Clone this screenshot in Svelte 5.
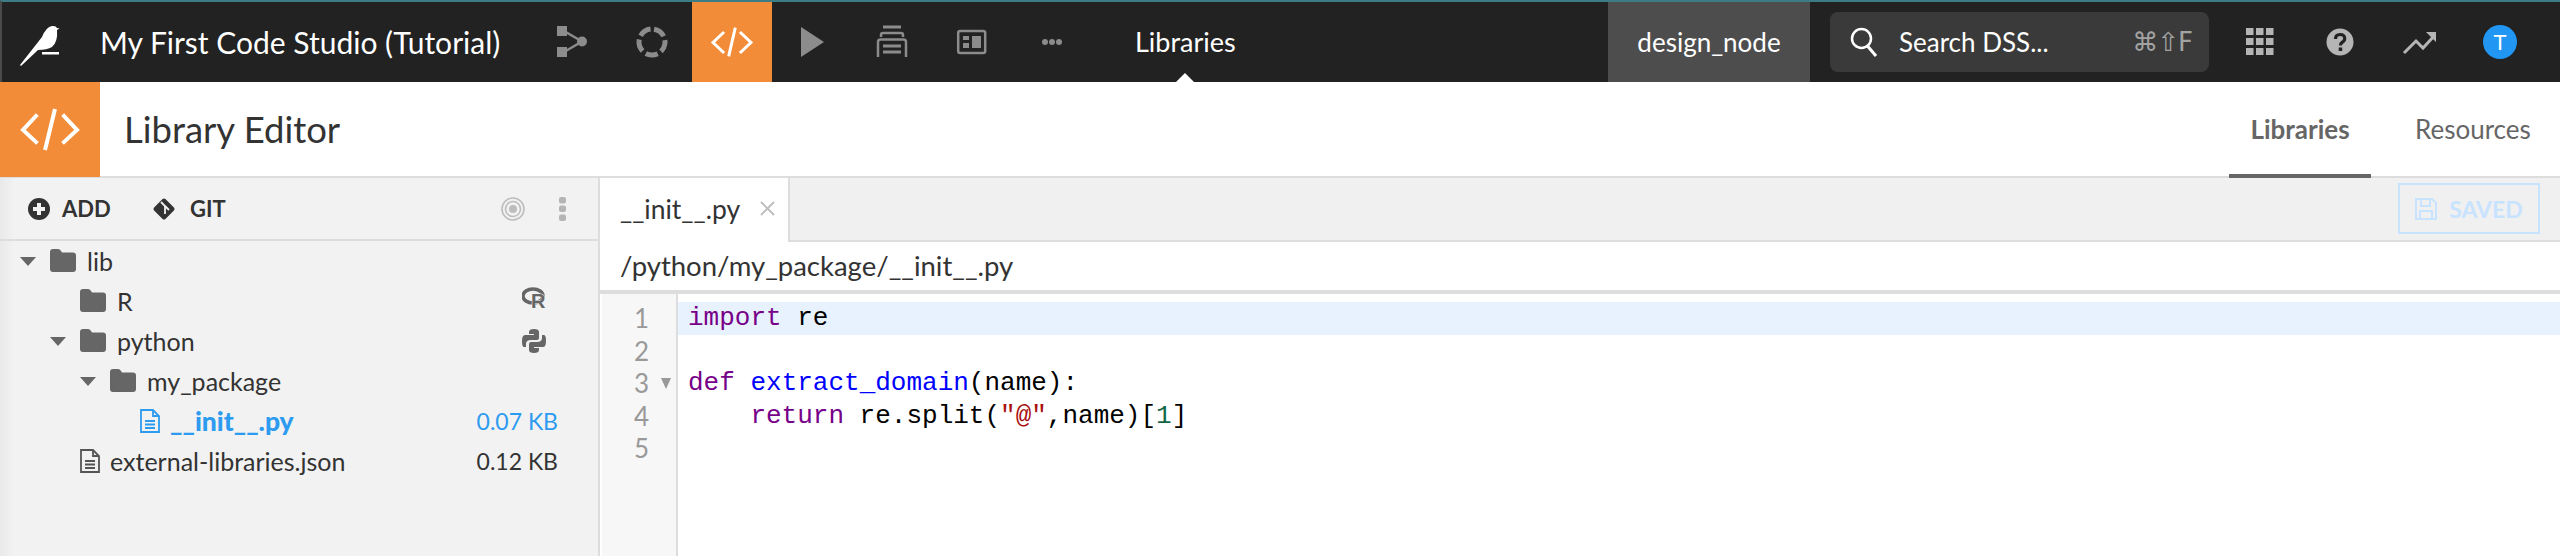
<script lang="ts">
  interface TreeRow {
    name: string;
    depth: number;
    kind: "folder" | "file";
    open?: boolean;
    size?: string;
    badge?: "r" | "python";
    active?: boolean;
  }

  const tree: TreeRow[] = [
    { name: "lib", depth: 0, kind: "folder", open: true },
    { name: "R", depth: 1, kind: "folder", badge: "r" },
    { name: "python", depth: 1, kind: "folder", open: true, badge: "python" },
    { name: "my_package", depth: 2, kind: "folder", open: true },
    { name: "__init__.py", depth: 3, kind: "file", size: "0.07 KB", active: true },
    { name: "external-libraries.json", depth: 1, kind: "file", size: "0.12 KB" },
  ];
</script>

<div class="page">
  <nav class="topbar">
    <div class="logo">
      <svg width="60" height="80" viewBox="2 2 60 80">
        <path d="M20 65 L42 37 Q46 27 52 26 Q56 25.500 57 28 L59.500 28.500 L57 30 Q58 42 52 47 Q47 50 38 50 L21 66 Z" fill="#fff" />
        <rect x="42" y="52" width="17" height="2.500" fill="#fff" />
      </svg>
    </div>
    <div class="project">My First Code Studio (Tutorial)</div>

    <div class="nav-cell">
      <svg width="36" height="36" viewBox="0 0 36 36" fill="#8c8c8c">
        <rect x="3" y="2" width="10" height="10" />
        <rect x="3" y="23" width="10" height="10" />
        <circle cx="28" cy="17.500" r="5" />
        <path d="M10 7 L28 17.500 L10 28" fill="none" stroke="#8c8c8c" stroke-width="2.500" />
      </svg>
    </div>
    <div class="nav-cell">
      <svg width="36" height="36" viewBox="0 0 36 36">
        <circle cx="18" cy="18" r="13" fill="none" stroke="#8c8c8c" stroke-width="5" stroke-dasharray="12.300 4.040" transform="rotate(-81 18 18)" />
      </svg>
    </div>
    <div class="nav-cell orange">
      <svg width="44" height="36" viewBox="0 0 44 36" fill="none" stroke="#fff" stroke-width="3" stroke-linecap="square">
        <path d="M13 9 L3 18.500 L13 28" />
        <path d="M31 9 L41 18.500 L31 28" />
        <path d="M25 5 L19 31" />
      </svg>
    </div>
    <div class="nav-cell">
      <svg width="36" height="36" viewBox="0 0 36 36" fill="#8c8c8c">
        <path d="M7 3 L30 18 L7 33 Z" />
      </svg>
    </div>
    <div class="nav-cell">
      <svg width="36" height="36" viewBox="0 0 36 36" fill="none" stroke="#8c8c8c" stroke-width="2.500">
        <path d="M9 3 H27" stroke-width="3" />
        <path d="M7 13 V11 Q7 9 9 9 H27 Q29 9 29 11 V13" />
        <path d="M4 33 V18 Q4 15.500 6.500 15.500 H29.500 Q32 15.500 32 18 V33" />
        <path d="M9 22 H27 M9 28 H27" stroke-width="3" />
      </svg>
    </div>
    <div class="nav-cell">
      <svg width="36" height="36" viewBox="0 0 36 36" fill="#8c8c8c">
        <rect x="4.200" y="7" width="27" height="22" rx="2" fill="none" stroke="#8c8c8c" stroke-width="2.500" />
        <rect x="9" y="12" width="6" height="4" />
        <rect x="9" y="19" width="6" height="5" />
        <rect x="18" y="12" width="9" height="12" />
      </svg>
    </div>
    <div class="nav-cell">
      <svg width="30" height="10" viewBox="0 0 30 10" fill="#8c8c8c">
        <circle cx="8" cy="5" r="3" />
        <circle cx="15" cy="5" r="3" />
        <circle cx="22" cy="5" r="3" />
      </svg>
    </div>

    <div class="section-name">Libraries</div>

    <div class="node-name">design_node</div>
    <div class="search">
      <svg width="28" height="32" viewBox="0 0 28 32" fill="none" stroke="#fff" stroke-width="2.500">
        <circle cx="11.500" cy="12.500" r="9.500" />
        <path d="M17.500 20 L26 30" stroke-width="3" />
      </svg>
      <span class="search-text">Search DSS...</span>
      <span class="search-keys">⌘⇧F</span>
    </div>
    <div class="right-icons">
      <div class="right-cell">
        <svg width="28" height="28" viewBox="0 0 28 28" fill="#b5b5b5">
          {#each [0, 10, 20] as y}
            {#each [0, 10, 20] as x}
              <rect x={x} y={y} width="7.500" height="7" />
            {/each}
          {/each}
        </svg>
      </div>
      <div class="right-cell">
        <svg width="28" height="28" viewBox="0 0 28 28">
          <circle cx="14" cy="14" r="13.500" fill="#b5b5b5" />
          <path d="M9.500 11 Q9.500 6.500 14 6.500 Q18.700 6.500 18.700 10.500 Q18.700 13 16 14.500 Q14.500 15.300 14.500 17.500" fill="none" stroke="#222" stroke-width="3.200" />
          <rect x="12.700" y="19.500" width="3.500" height="3.500" fill="#222" />
        </svg>
      </div>
      <div class="right-cell">
        <svg width="36" height="28" viewBox="0 0 36 28" fill="none" stroke="#b5b5b5" stroke-width="3">
          <path d="M2 25 L14 13 L21 20 L33 7" />
          <path d="M24 4 H34 V14 Z" fill="#b5b5b5" stroke="none" />
        </svg>
      </div>
      <div class="right-cell">
        <span class="avatar">T</span>
      </div>
    </div>
  </nav>

  <header class="subheader">
    <div class="subheader-icon">
      <svg width="60" height="44" viewBox="0 0 60 44" fill="none" stroke="#fff" stroke-width="4" stroke-linecap="square">
        <path d="M16 8 L3 22 L16 34" />
        <path d="M44 8 L57 22 L44 34" />
        <path d="M34.500 3 L25.500 40" />
      </svg>
    </div>
    <h1>Library Editor</h1>
    <div class="subtabs">
      <div class="subtab active">Libraries</div>
      <div class="subtab">Resources</div>
    </div>
  </header>

  <div class="workspace">
    <aside class="sidebar">
      <div class="toolbar">
        <svg class="add-icon" width="22" height="22" viewBox="0 0 22 22">
          <circle cx="11" cy="11" r="11" fill="#333" />
          <path d="M11 5 V17 M5 11 H17" stroke="#f2f2f2" stroke-width="4" />
        </svg>
        <span class="tool-label add-label">ADD</span>
        <svg class="git-icon" width="24" height="24" viewBox="0 0 24 24">
          <rect x="4" y="4" width="16" height="16" rx="2" fill="#333" transform="rotate(45 12 12)" />
          <path d="M9 5 L13 9 V17 M13 9 L17 13" stroke="#f2f2f2" stroke-width="1.800" fill="none" />
        </svg>
        <span class="tool-label git-label">GIT</span>
        <svg class="target" width="24" height="24" viewBox="0 0 24 24" fill="none" stroke="#bdbdbd">
          <circle cx="12" cy="12" r="11" stroke-width="1.600" />
          <circle cx="12" cy="12" r="7.500" stroke-width="1.600" />
          <circle cx="12" cy="12" r="4" fill="#bdbdbd" stroke="none" />
        </svg>
        <svg class="kebab" width="7" height="24" viewBox="0 0 7 24" fill="#b5b5b5">
          <rect y="0" width="7" height="6.500" rx="2" />
          <rect y="8.500" width="7" height="6.500" rx="2" />
          <rect y="17.500" width="7" height="6.500" rx="2" />
        </svg>
      </div>

      <div class="tree">
        {#each tree as row}
          <div class="row" class:active={row.active} style="padding-left: {20 + row.depth * 30}px">
            <span class="caret-slot">
              {#if row.open}<span class="caret"></span>{/if}
            </span>
            {#if row.kind === "folder"}
              <svg class="folder" width="26" height="24" viewBox="0 0 26 24" fill="#666">
                <path d="M0 3 Q0 0 3 0 H8 Q10 0 11 2 L12 3.500 H23 Q26 3.500 26 6.500 V20 Q26 23 23 23 H3 Q0 23 0 20 Z" />
              </svg>
            {:else}
              <svg class="file" width="20" height="24" viewBox="0 0 20 24" fill="none" stroke="currentColor" stroke-width="1.800">
                <path d="M1 1 H13 L19 7 V23 H1 Z" />
                <path d="M13 1 V7 H19 M5 12 H15 M5 15.500 H15 M5 19 H15" />
              </svg>
            {/if}
            <span class="name">{row.name}</span>
            {#if row.badge === "r"}
              <svg class="badge" width="24" height="28" viewBox="0 0 24 28">
                <ellipse cx="11" cy="9" rx="10" ry="7" fill="none" stroke="#666" stroke-width="3.500" />
                <text x="9" y="21" class="r-mark">R</text>
              </svg>
            {:else if row.badge === "python"}
              <svg class="badge" width="24" height="26" viewBox="0 0 24 26" fill="#666">
                <path d="M7 6 V4 Q7 1 12 1 Q17 1 17 4 V10 Q17 12 15 12 H9 Q4 12 4 16 V19 H2 Q0 19 0 13 Q0 7 3 7 H12 V6 Z" />
                <path d="M17 20 V22 Q17 25 12 25 Q7 25 7 22 V16 Q7 14 9 14 H15 Q20 14 20 10 V7 H22 Q24 7 24 13 Q24 19 21 19 H12 V20 Z" />
              </svg>
            {/if}
            {#if row.size}<span class="size">{row.size}</span>{/if}
          </div>
        {/each}
      </div>
    </aside>

    <main class="editor">
      <div class="tabstrip">
        <div class="tab">
          <span>__init__.py</span>
          <svg width="15" height="15" viewBox="0 0 15 15" stroke="#bbb" stroke-width="1.800">
            <path d="M1 1 L14 14 M14 1 L1 14" />
          </svg>
        </div>
        <button class="saved">
          <svg width="22" height="22" viewBox="0 0 22 22" fill="none" stroke="#c8e3ff" stroke-width="2">
            <path d="M1 1 H17 L21 5 V21 H1 Z" />
            <path d="M6 1 V8 H15 V1 M5 21 V13 H17 V21" />
          </svg>
          SAVED
        </button>
      </div>
      <div class="path">/python/my_package/__init__.py</div>
      <div class="code">
        <div class="gutter">
          <div class="ln">1</div>
          <div class="ln">2</div>
          <div class="ln">3<span class="fold"></span></div>
          <div class="ln">4</div>
          <div class="ln">5</div>
        </div>
        <div class="lines">
          <div class="line current"><span class="kw">import</span> re</div>
          <div class="line">&nbsp;</div>
          <div class="line"><span class="kw">def</span> <span class="fn">extract_domain</span>(name):</div>
          <div class="line indented"><span class="kw">return</span> re.split(<span class="str">"@"</span>,name)[<span class="num">1</span>]</div>
          <div class="line">&nbsp;</div>
        </div>
      </div>
    </main>
  </div>
</div>

<style>
  :global(body) {
    margin: 0;
    background: #fff;
  }
  .page {
    width: 2560px;
    height: 556px;
    overflow: hidden;
    display: flex;
    flex-direction: column;
    font-family: "Lato", "Noto Sans", sans-serif;
    color: #333;
  }
  .topbar {
    height: 80px;
    flex: none;
    display: flex;
    align-items: stretch;
    background: #222;
    border-top: 2px solid #3b7c85;
    border-left: 2px solid #4a4a4a;
    color: #fff;
  }
  .logo {
    width: 98px;
    flex: none;
  }
  .logo svg {
    display: block;
  }
  .project {
    width: 432px;
    flex: none;
    font-size: 30px;
    line-height: 80px;
    white-space: nowrap;
  }
  .nav-cell {
    width: 80px;
    flex: none;
    display: flex;
    align-items: center;
    justify-content: center;
  }
  .nav-cell.orange {
    background: #f28c38;
  }
  .section-name {
    position: relative;
    margin-left: 43px;
    font-size: 27px;
    line-height: 80px;
  }
  .section-name::after {
    content: "";
    position: absolute;
    left: 50%;
    bottom: 0;
    margin-left: -9px;
    border: 9px solid transparent;
    border-top: 0;
    border-bottom-color: #fff;
  }
  .node-name {
    margin-left: auto;
    width: 202px;
    background: #4d4d4d;
    font-size: 26px;
    line-height: 80px;
    text-align: center;
  }
  .search {
    width: 379px;
    box-sizing: border-box;
    height: 60px;
    align-self: center;
    margin-left: 20px;
    padding: 0 17px 0 20px;
    display: flex;
    align-items: center;
    background: #3a3a3a;
    border-radius: 8px;
  }
  .search-text {
    margin-left: 21px;
    font-size: 26px;
  }
  .search-keys {
    margin-left: auto;
    font-size: 26px;
    color: #a3a3a3;
    font-family: "DejaVu Sans", sans-serif;
    letter-spacing: -1px;
  }
  .right-icons {
    display: flex;
    margin-left: 11px;
    padding-right: 20px;
  }
  .right-cell {
    width: 80px;
    display: flex;
    align-items: center;
    justify-content: center;
  }
  .avatar {
    width: 34px;
    height: 34px;
    border-radius: 50%;
    background: #2196f3;
    color: #fff;
    font-size: 22px;
    line-height: 34px;
    text-align: center;
  }
  .subheader {
    height: 96px;
    flex: none;
    box-sizing: border-box;
    display: flex;
    align-items: stretch;
    border-bottom: 2px solid #ddd;
    background: #fff;
  }
  .subheader-icon {
    width: 100px;
    height: 95px;
    flex: none;
    background: #f28c38;
    display: flex;
    align-items: center;
    justify-content: center;
  }
  h1 {
    margin: 0 0 0 24px;
    font-size: 36.500px;
    font-weight: 400;
    line-height: 94px;
    color: #333;
  }
  .subtabs {
    margin-left: auto;
    display: flex;
  }
  .subtab {
    width: 189px;
    height: 96px;
    box-sizing: border-box;
    padding-left: 44px;
    font-size: 26px;
    line-height: 94px;
    color: #666;
  }
  .subtab.active {
    width: 142px;
    padding-left: 0;
    font-weight: 700;
    text-align: center;
    border-bottom: 4px solid #666;
  }
  .workspace {
    flex: 1;
    display: flex;
    min-height: 0;
  }
  .sidebar {
    width: 598px;
    flex: none;
    background: linear-gradient(90deg, #e9e9e9, #f2f2f2 14px);
    border-right: 2px solid #ddd;
  }
  .toolbar {
    height: 63px;
    box-sizing: border-box;
    display: flex;
    align-items: center;
    padding-left: 28px;
    border-bottom: 2px solid #ddd;
  }
  .tool-label {
    font-size: 22px;
    font-weight: 700;
    color: #333;
    margin-left: 12px;
  }
  .git-label {
    margin-left: 14px;
  }
  .add-label {
    width: 46px;
  }
  .git-icon {
    margin-left: 44px;
  }
  .target {
    margin-left: auto;
  }
  .kebab {
    margin: 0 32px 0 34px;
  }
  .row {
    height: 40px;
    display: flex;
    align-items: center;
    padding-right: 40px;
    font-size: 25px;
    color: #333;
  }
  .row.active {
    color: #2d9bf0;
  }
  .row.active .name {
    font-size: 26.500px;
    font-weight: 900;
  }
  .caret-slot {
    width: 30px;
    flex: none;
  }
  .caret {
    display: block;
    width: 0;
    border: 8px solid transparent;
    border-bottom: 0;
    border-top: 9px solid #666;
  }
  .folder {
    flex: none;
    margin-right: 11px;
  }
  .file {
    flex: none;
    margin-right: 10px;
    color: #555;
  }
  .row.active .file {
    color: #2d9bf0;
  }
  .badge {
    margin-left: auto;
    margin-right: 12px;
  }
  .r-mark {
    font-family: "Liberation Sans", sans-serif;
    font-size: 20px;
    font-weight: 700;
    fill: #666;
    stroke: #f2f2f2;
    stroke-width: 1px;
    paint-order: stroke;
  }
  .size {
    margin-left: auto;
    font-size: 23px;
  }
  .editor {
    flex: 1;
    min-width: 0;
    display: flex;
    flex-direction: column;
    background: #fff;
  }
  .tabstrip {
    height: 64px;
    flex: none;
    box-sizing: border-box;
    display: flex;
    background: #f0f0f0;
    border-bottom: 2px solid #ddd;
  }
  .tab {
    width: 190px;
    height: 64px;
    box-sizing: border-box;
    padding: 0 0 3px 20px;
    display: flex;
    align-items: center;
    gap: 20px;
    background: #fff;
    border-right: 2px solid #ddd;
    font-size: 26.500px;
    color: #333;
  }
  .saved {
    margin: 5px 20px 0 auto;
    width: 142px;
    height: 51px;
    box-sizing: border-box;
    border: 2px solid #c8e3ff;
    background: transparent;
    color: #c8e3ff;
    font-family: inherit;
    font-size: 23px;
    font-weight: 700;
    display: flex;
    align-items: center;
    justify-content: center;
    gap: 12px;
    padding: 0;
  }
  .path {
    height: 52px;
    flex: none;
    box-sizing: border-box;
    padding-left: 20px;
    font-size: 27.500px;
    line-height: 48px;
    color: #333;
    border-bottom: 4px solid #ddd;
  }
  .code {
    flex: 1;
    display: flex;
    padding-left: 2px;
    font-family: "Liberation Mono", monospace;
    font-size: 26px;
    line-height: 32.500px;
    color: #000;
  }
  .gutter {
    width: 76px;
    flex: none;
    box-sizing: border-box;
    padding: 8px 27px 0 0;
    background: #f7f7f7;
    border-right: 2px solid #ddd;
    color: #999;
    text-align: right;
    font-family: "Lato", sans-serif;
    font-size: 26px;
  }
  .ln {
    position: relative;
    height: 32.500px;
  }
  .fold {
    position: absolute;
    right: -22px;
    top: 11px;
    border: 5px solid transparent;
    border-bottom: 0;
    border-top: 11px solid #999;
  }
  .lines {
    flex: 1;
    padding-top: 8px;
  }
  .line {
    height: 32.500px;
    padding-left: 10px;
    white-space: pre;
  }
  .line.indented {
    padding-left: 72.400px;
  }
  .line.current {
    background: #e8f2ff;
  }
  .kw {
    color: #708;
  }
  .fn {
    color: #00f;
  }
  .str {
    color: #a11;
  }
  .num {
    color: #164;
  }
</style>
